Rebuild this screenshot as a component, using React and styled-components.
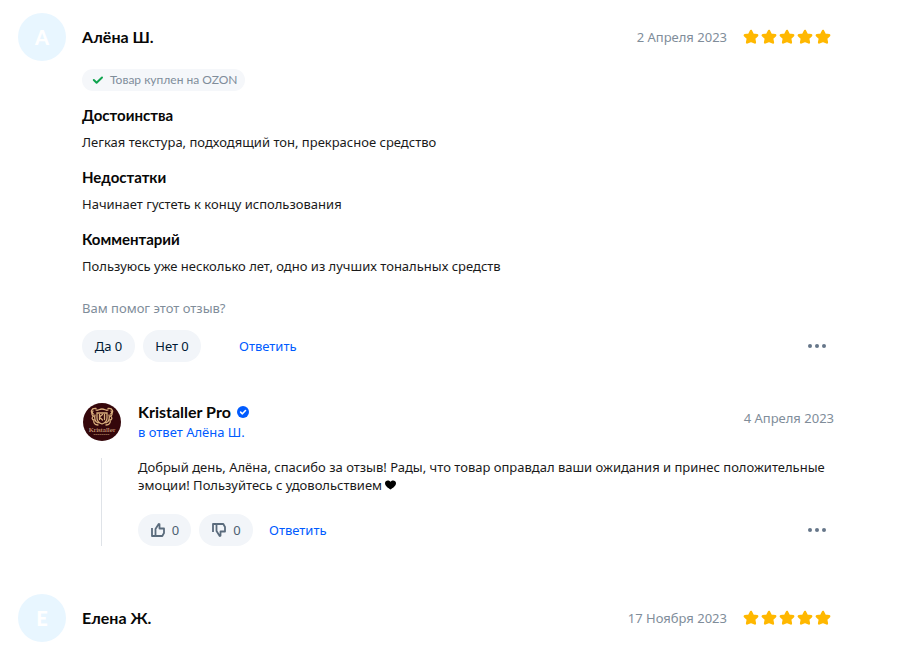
import React from "react";
import styled, { createGlobalStyle } from "styled-components";

const GlobalStyle = createGlobalStyle`
  * { box-sizing: border-box; }
  body {
    margin: 0;
    background: #ffffff;
    color: #001a34;
    font-family: "Noto Sans", sans-serif;
    font-size: 13px;
    line-height: 20px;
  }
  h2, h3, p { margin: 0; }
`;

const Feed = styled.main`
  display: flex;
  flex-direction: column;
  gap: 48px;
  padding: 13px 85px 24px 18px;
`;

const Review = styled.article`
  display: flex;
  flex-direction: column;
`;

const ReviewHeader = styled.header`
  display: flex;
  align-items: center;
  gap: 16px;
  height: 48px;
`;

const Initial = styled.span`
  display: flex;
  align-items: center;
  justify-content: center;
  flex: none;
  width: 48px;
  height: 48px;
  border-radius: 50%;
  background: #e8f6ff;
  color: #ffffff;
  font-family: "Lato", sans-serif;
  font-size: 20px;
  font-weight: 900;
`;

const Author = styled.h2`
  flex: 1;
  color: #070707;
  font-family: "Lato", sans-serif;
  font-size: 16px;
  font-weight: 700;
  line-height: 22px;
`;

const PostedAt = styled.time`
  color: #808d9a;
`;

const Stars = styled.span`
  display: flex;
  gap: 2px;
  padding-right: 3px;
  color: #ffb800;

  svg { display: block; }
`;

const ReviewBody = styled.div`
  display: flex;
  flex-direction: column;
  align-items: stretch;
  padding: 8px 0 0 64px;
`;

const Purchased = styled.span`
  display: flex;
  align-items: center;
  align-self: flex-start;
  gap: 6px;
  height: 22px;
  padding: 0 8px 0 10px;
  border-radius: 11px;
  background: #f5f7fa;
  color: #808d9a;
  font-family: "Lato", sans-serif;
  font-size: 12px;
`;

const Sections = styled.div`
  display: flex;
  flex-direction: column;
  gap: 14px;
  padding: 13px 0 22px;
`;

const SectionTitle = styled.h3`
  margin-bottom: 6px;
  color: #070707;
  font-family: "Lato", sans-serif;
  font-size: 15px;
  font-weight: 700;
  line-height: 22px;
`;

const SectionText = styled.p`
  color: #1a1a1a;
`;

const Question = styled.p`
  margin-bottom: 12px;
  color: #808d9a;
`;

const Actions = styled.div`
  display: flex;
  align-items: center;
  gap: 8px;
`;

const Vote = styled.button`
  display: flex;
  align-items: center;
  justify-content: center;
  gap: 6px;
  min-width: ${(p) => p.$width}px;
  height: 32px;
  padding: 0 8px;
  border: 0;
  border-radius: 16px;
  background: #f2f5f9;
  color: ${(p) => (p.$muted ? "#4d5f71" : "#001a34")};
  font: inherit;
  cursor: pointer;
`;

const Answer = styled.button`
  margin-left: ${(p) => p.$gap}px;
  padding: 0;
  border: 0;
  background: none;
  color: #005bff;
  font: inherit;
  cursor: pointer;
`;

const More = styled.button`
  display: flex;
  margin-left: auto;
  padding: 4px 7px;
  border: 0;
  background: none;
  color: #66768a;
  cursor: pointer;
`;

const Reply = styled.section`
  display: grid;
  grid-template-columns: 40px 1fr;
  column-gap: 16px;
  row-gap: 16px;
  margin-top: 40px;
`;

const ReplyHeader = styled.header`
  display: flex;
  align-items: flex-start;
  justify-content: space-between;
`;

const ReplyDate = styled(PostedAt)`
  padding-top: 6px;
`;

const Shop = styled.div`
  display: flex;
  flex-direction: column;
`;

const ShopName = styled.h2`
  display: flex;
  align-items: center;
  gap: 6px;
  color: #070707;
  font-family: "Lato", sans-serif;
  font-size: 16px;
  font-weight: 700;
  line-height: 20px;
`;

const ReplyTo = styled.a`
  color: #005bff;
  line-height: 20px;
  text-decoration: none;
`;

const Thread = styled.div`
  width: 1px;
  margin-left: 19px;
  background: #dfe3e8;
`;

const ReplyText = styled.p`
  margin-bottom: 20px;
  color: #1a1a1a;
  line-height: 18px;
`;

function Star() {
  return (
    <svg width="16" height="16" viewBox="0 0 16 16" aria-hidden="true">
      <path
        fill="currentColor"
        stroke="currentColor"
        strokeWidth="2.4"
        strokeLinejoin="round"
        d="M8 1.9l1.8 3.7 4.4.7-3.1 3 .8 4.2L8 11.8l-3.9 1.7.8-4.2-3.1-3 4.4-.7z"
      />
    </svg>
  );
}

function Rating({ value }) {
  return (
    <Stars role="img" aria-label={`${value} из 5`}>
      {Array.from({ length: value }, (_, i) => <Star key={i} />)}
    </Stars>
  );
}

function Header({ initial, name, date }) {
  return (
    <ReviewHeader>
      <Initial>{initial}</Initial>
      <Author>{name}</Author>
      <PostedAt>{date}</PostedAt>
      <Rating value={5} />
    </ReviewHeader>
  );
}

function CheckIcon() {
  return (
    <svg width="12" height="12" viewBox="0 0 12 12" aria-hidden="true">
      <path d="M1.8 6l2.8 2.7L10 3.5" fill="none" stroke="#10a44f" strokeWidth="2" strokeLinecap="round" strokeLinejoin="round" />
    </svg>
  );
}

function VerifiedIcon() {
  return (
    <svg width="12" height="12" viewBox="0 0 12 12" aria-hidden="true">
      <circle cx="6" cy="6" r="6" fill="#005bff" />
      <path d="M3.6 6.1l1.8 1.7 3.1-3.3" fill="none" stroke="#fff" strokeWidth="1.6" strokeLinecap="round" strokeLinejoin="round" />
    </svg>
  );
}

function ThumbIcon({ down }) {
  return (
    <svg width="16" height="16" viewBox="0 0 16 16" aria-hidden="true">
      <g transform={down ? "matrix(1 0 0 -1 0 16)" : undefined} fill="none" stroke="#5a6b7c" strokeWidth="1.8" strokeLinejoin="round">
        <path d="M2 6v8h3" />
        <path d="M5.5 14h6.8l1.7-3V6.5H9.5V2.2L8.7 2 5.5 7z" />
      </g>
    </svg>
  );
}

function DotsIcon() {
  return (
    <svg width="20" height="20" viewBox="0 0 20 20" fill="currentColor" aria-hidden="true">
      <circle cx="3" cy="10" r="2" />
      <circle cx="10" cy="10" r="2" />
      <circle cx="17" cy="10" r="2" />
    </svg>
  );
}

function HeartIcon() {
  return (
    <svg width="11" height="10" viewBox="0 0 11 10" aria-hidden="true">
      <path fill="#000" d="M5.5 9.5C3.5 8 0 6 0 3.2 0 .4 3.7-.5 5.5 1.8 7.3-.5 11 .4 11 3.2 11 6 7.5 8 5.5 9.5z" />
    </svg>
  );
}

function ShopLogo() {
  return (
    <svg width="40" height="40" viewBox="0 0 40 40" role="img" aria-label="Kristaller">
      <circle cx="20" cy="20" r="19" fill="#35070b" />
      <g fill="none" stroke="#d9ae7c" strokeWidth="1.3" strokeLinecap="round">
        <path d="M14 6.5c-5-.5-6 4-2.5 5.5M26 6.5c5-.5 6 4 2.5 5.5" />
        <path d="M11 9c-2 3-1 5 1 5-3 1-2 4 0 4-1 3 1 5 4 5M29 9c2 3 1 5-1 5 3 1 2 4 0 4 1 3-1 5-4 5" />
        <path d="M14 8c2 1 3-1 6-1s4 2 6 1M15 11v5c0 3 2 5 5 6 3-1 5-3 5-6v-5zM13 13c-1 3 0 7 3 8M27 13c1 3 0 7-3 8" />
        <path d="M17.5 12.5v5M17.5 15l3-2.5M17.5 15l3 3M22.5 12.5v5" />
        <path d="M12 32.5h16" strokeWidth="0.5" strokeDasharray="1 1" />
      </g>
      <text x="20" y="30" textAnchor="middle" fill="#e2bb8d" fontFamily="Liberation Serif" fontSize="7">Kristaller</text>
    </svg>
  );
}

const sections = [
  ["Достоинства", "Легкая текстура, подходящий тон, прекрасное средство"],
  ["Недостатки", "Начинает густеть к концу использования"],
  ["Комментарий", "Пользуюсь уже несколько лет, одно из лучших тональных средств"],
];

export default function App() {
  return (
    <>
      <GlobalStyle />
      <Feed>
        <Review>
          <Header initial="А" name="Алёна Ш." date="2 Апреля 2023" />
          <ReviewBody>
            <Purchased><CheckIcon />Товар куплен на OZON</Purchased>
            <Sections>
              {sections.map(([title, text]) => (
                <div key={title}>
                  <SectionTitle>{title}</SectionTitle>
                  <SectionText>{text}</SectionText>
                </div>
              ))}
            </Sections>
            <Question>Вам помог этот отзыв?</Question>
            <Actions>
              <Vote $width={53}>Да 0</Vote>
              <Vote $width={58}>Нет 0</Vote>
              <Answer $gap={30}>Ответить</Answer>
              <More aria-label="Ещё"><DotsIcon /></More>
            </Actions>
            <Reply>
              <ShopLogo />
              <ReplyHeader>
                <Shop>
                  <ShopName>Kristaller Pro <VerifiedIcon /></ShopName>
                  <ReplyTo href="#">в ответ Алёна Ш.</ReplyTo>
                </Shop>
                <ReplyDate>4 Апреля 2023</ReplyDate>
              </ReplyHeader>
              <Thread />
              <div>
                <ReplyText>
                  Добрый день, Алёна, спасибо за отзыв! Рады, что товар оправдал ваши ожидания и принес положительные эмоции! Пользуйтесь с удовольствием <HeartIcon />
                </ReplyText>
                <Actions>
                  <Vote $width={53} $muted aria-label="Нравится, 0"><ThumbIcon />0</Vote>
                  <Vote $width={54} $muted aria-label="Не нравится, 0"><ThumbIcon down />0</Vote>
                  <Answer $gap={8}>Ответить</Answer>
                  <More aria-label="Ещё"><DotsIcon /></More>
                </Actions>
              </div>
            </Reply>
          </ReviewBody>
        </Review>
        <Review>
          <Header initial="Е" name="Елена Ж." date="17 Ноября 2023" />
        </Review>
      </Feed>
    </>
  );
}
